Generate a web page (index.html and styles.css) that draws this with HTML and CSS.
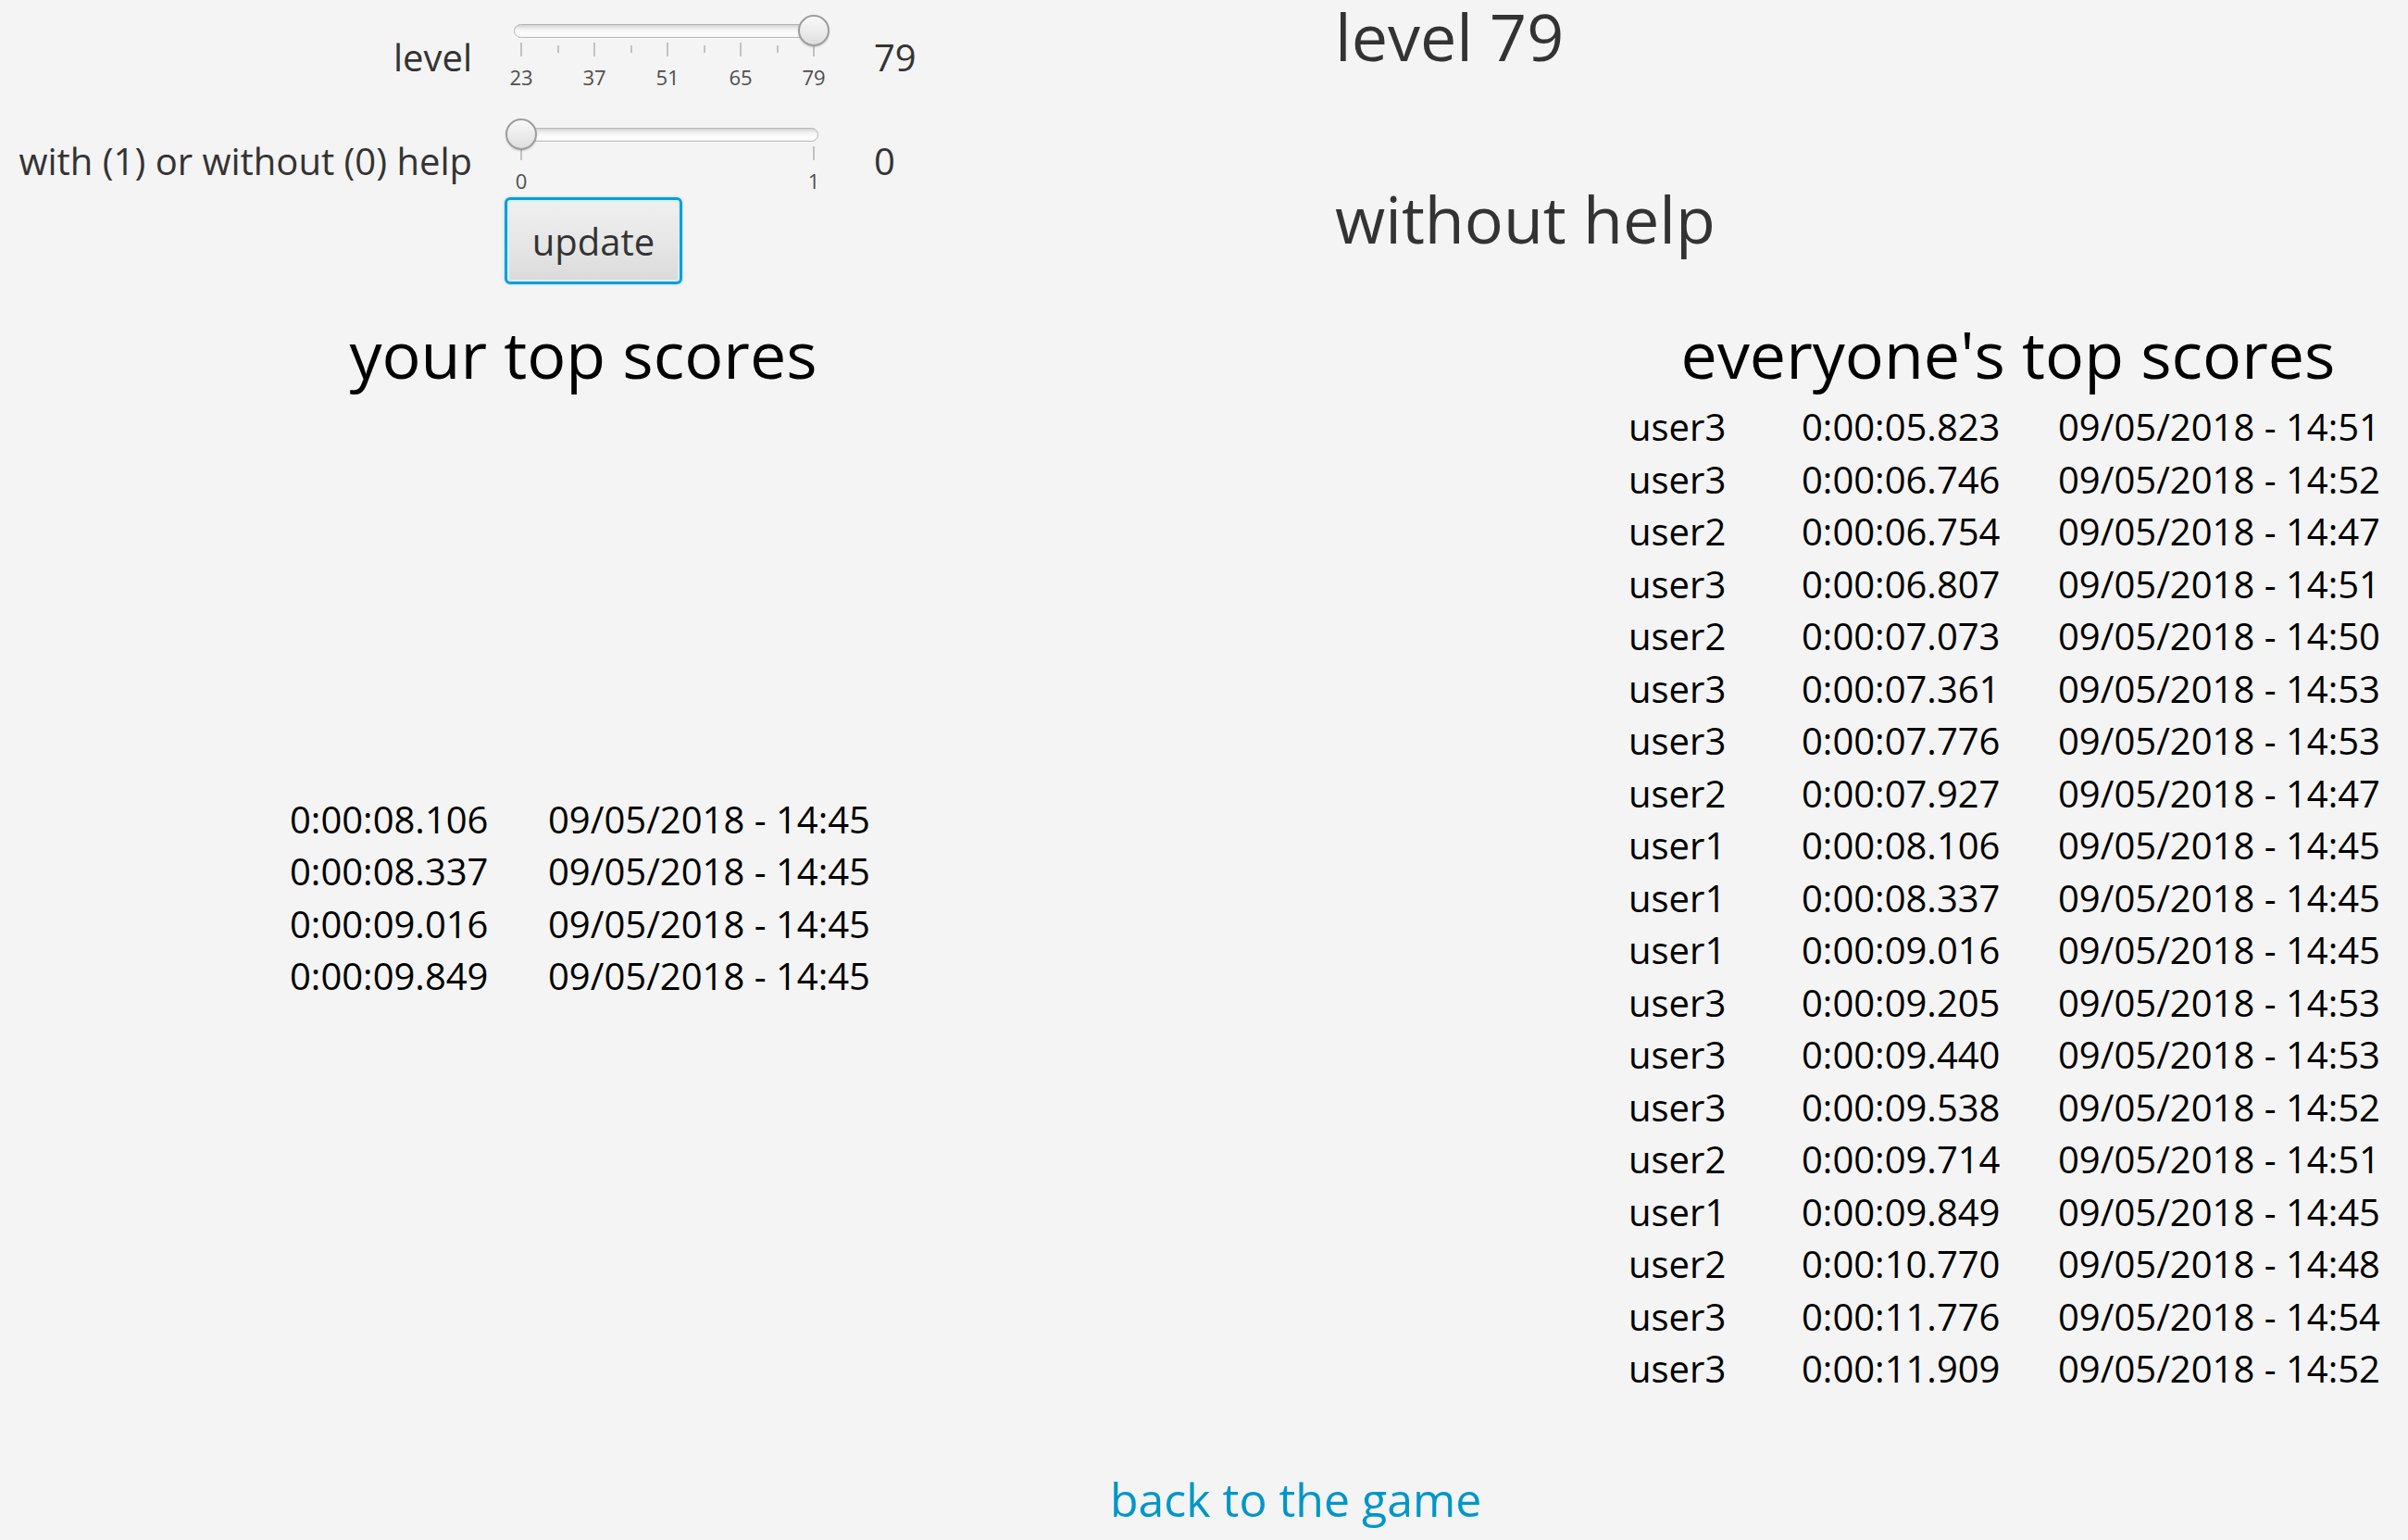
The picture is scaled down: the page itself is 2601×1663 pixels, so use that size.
FILE: index.html
```html
<!DOCTYPE html>
<html lang="en">
<head>
<meta charset="utf-8">
<title>Top scores</title>
<link rel="stylesheet" href="styles.css">
</head>
<body>
<div class="page">
  <section class="top">
    <div class="controls">
      <div class="ctl-label">level</div>
      <div class="slider">
        <div class="track"></div>
        <div class="thumb thumb-end"></div>
        <div class="ticks">
          <span class="tick"></span><span class="tick minor"></span>
          <span class="tick"></span><span class="tick minor"></span>
          <span class="tick"></span><span class="tick minor"></span>
          <span class="tick"></span><span class="tick minor"></span>
          <span class="tick"></span>
        </div>
        <div class="tick-labels">
          <span>23</span><span>37</span><span>51</span><span>65</span><span>79</span>
        </div>
      </div>
      <div class="ctl-value">79</div>

      <div class="ctl-label">with (1) or without (0) help</div>
      <div class="slider">
        <div class="track"></div>
        <div class="thumb thumb-start"></div>
        <div class="ticks">
          <span class="tick"></span>
          <span class="tick"></span>
        </div>
        <div class="tick-labels">
          <span>0</span><span>1</span>
        </div>
      </div>
      <div class="ctl-value">0</div>

      <button class="update" type="button">update</button>
    </div>
    <div class="status">
      <div class="status-line">level 79</div>
      <div class="status-line status-help">without help</div>
    </div>
  </section>

  <section class="scores">
    <h2 class="scores-title title-mine">your top scores</h2>
    <div class="score-list list-mine">
      <span>0:00:08.106</span><span>09/05/2018 - 14:45</span>
      <span>0:00:08.337</span><span>09/05/2018 - 14:45</span>
      <span>0:00:09.016</span><span>09/05/2018 - 14:45</span>
      <span>0:00:09.849</span><span>09/05/2018 - 14:45</span>
    </div>

    <h2 class="scores-title title-all">everyone's top scores</h2>
    <div class="score-list list-all">
      <span>user3</span><span>0:00:05.823</span><span>09/05/2018 - 14:51</span>
      <span>user3</span><span>0:00:06.746</span><span>09/05/2018 - 14:52</span>
      <span>user2</span><span>0:00:06.754</span><span>09/05/2018 - 14:47</span>
      <span>user3</span><span>0:00:06.807</span><span>09/05/2018 - 14:51</span>
      <span>user2</span><span>0:00:07.073</span><span>09/05/2018 - 14:50</span>
      <span>user3</span><span>0:00:07.361</span><span>09/05/2018 - 14:53</span>
      <span>user3</span><span>0:00:07.776</span><span>09/05/2018 - 14:53</span>
      <span>user2</span><span>0:00:07.927</span><span>09/05/2018 - 14:47</span>
      <span>user1</span><span>0:00:08.106</span><span>09/05/2018 - 14:45</span>
      <span>user1</span><span>0:00:08.337</span><span>09/05/2018 - 14:45</span>
      <span>user1</span><span>0:00:09.016</span><span>09/05/2018 - 14:45</span>
      <span>user3</span><span>0:00:09.205</span><span>09/05/2018 - 14:53</span>
      <span>user3</span><span>0:00:09.440</span><span>09/05/2018 - 14:53</span>
      <span>user3</span><span>0:00:09.538</span><span>09/05/2018 - 14:52</span>
      <span>user2</span><span>0:00:09.714</span><span>09/05/2018 - 14:51</span>
      <span>user1</span><span>0:00:09.849</span><span>09/05/2018 - 14:45</span>
      <span>user2</span><span>0:00:10.770</span><span>09/05/2018 - 14:48</span>
      <span>user3</span><span>0:00:11.776</span><span>09/05/2018 - 14:54</span>
      <span>user3</span><span>0:00:11.909</span><span>09/05/2018 - 14:52</span>
    </div>
  </section>

  <a class="back" href="#">back to the game</a>
</div>
</body>
</html>
```

FILE: styles.css
```css
html, body {
  margin: 0;
  padding: 0;
  background: #f4f4f4;
}

body {
  font-family: "Open Sans", "Noto Sans", "Liberation Sans", sans-serif;
  color: #333;
}

.page {
  width: 2601px;
  height: 1663px;
  overflow: hidden;
}

/* ---------- top area ---------- */
.top {
  display: grid;
  grid-template-columns: 1442px 1fr;
  align-items: start;
}

.controls {
  display: grid;
  grid-template-columns: 510px 350px auto;
  grid-template-rows: 112px 85px auto;
  column-gap: 35px;
  padding-top: 16px;
  align-items: start;
}

.ctl-label {
  font-size: 40px;
  line-height: 40px;
  margin-top: 26px;
  text-align: right;
  white-space: nowrap;
  color: #333;
}

.ctl-value {
  font-size: 40px;
  line-height: 40px;
  margin-top: 26px;
  padding-left: 14px;
  color: #333;
}

/* slider */
.slider {
  position: relative;
  width: 350px;
}

.track {
  box-sizing: border-box;
  margin: 10px 0 0 10px;
  width: 329px;
  height: 15px;
  border-radius: 8px;
  border: 1px solid #b4b4b4;
  background: linear-gradient(to bottom, #d4d4d4 0%, #f2f2f2 35%, #fdfdfd 70%, #f6f6f6 100%);
  box-shadow: 0 1px 0 #ffffff;
}

.thumb {
  position: absolute;
  top: 0;
  box-sizing: border-box;
  width: 34px;
  height: 34px;
  border-radius: 50%;
  border: 2px solid #9d9d9d;
  background: linear-gradient(to bottom, #f8f8f8 0%, #ececec 50%, #dedede 100%);
  box-shadow: 0 1px 2px rgba(0, 0, 0, 0.18), inset 0 1px 0 #ffffff;
}

.thumb-end {
  left: 317px;
}

.thumb-start {
  left: 1px;
}

.ticks {
  display: flex;
  justify-content: space-between;
  align-items: flex-start;
  margin: 5px 0 0 17px;
  width: 318px;
  height: 15px;
}

.tick {
  display: block;
  width: 2px;
  height: 15px;
  background: #c2c2c2;
}

.tick.minor {
  height: 8px;
  margin-top: 3px;
}

.tick-labels {
  display: flex;
  justify-content: space-between;
  margin: 11px 0 0 -2px;
  width: 356px;
  font-size: 22px;
  line-height: 22px;
  color: #4e4e4e;
}

.tick-labels span {
  display: block;
  width: 40px;
  text-align: center;
}

.update {
  grid-column: 2;
  grid-row: 3;
  justify-self: start;
  box-sizing: border-box;
  width: 192px;
  height: 94px;
  padding: 0;
  font-family: inherit;
  font-size: 40px;
  color: #333;
  border: 3px solid #0a9fd6;
  border-radius: 6px;
  background: linear-gradient(to bottom, #f0f0f0 0%, #e6e6e6 55%, #dadada 100%);
  box-shadow: inset 0 0 0 2px #d9eef7, 0 0 3px rgba(3, 158, 211, 0.35);
}

.status {
  display: flex;
  flex-direction: column;
}

.status-line {
  font-size: 70px;
  line-height: 78px;
  color: #333;
  white-space: nowrap;
}

.status-help {
  margin-top: 119px;
}

/* ---------- scores ---------- */
.scores {
  display: grid;
  grid-template-columns: 1260px 1fr 864px;
  grid-template-rows: auto auto;
  row-gap: 12px;
  margin-top: 36px;
}

.scores-title {
  margin: 0;
  font-size: 70px;
  line-height: 78px;
  font-weight: normal;
  color: #000;
  text-align: center;
  white-space: nowrap;
}

.title-mine {
  grid-column: 1;
  grid-row: 1;
}

.title-all {
  grid-column: 3;
  grid-row: 1;
}

.score-list {
  display: grid;
  font-size: 40px;
  line-height: 56.5px;
  color: #000;
  white-space: nowrap;
}

.list-mine {
  grid-column: 1;
  grid-row: 2;
  align-self: center;
  grid-template-columns: 279px auto;
  padding-left: 313px;
}

.list-all {
  grid-column: 3;
  grid-row: 2;
  grid-template-columns: 187px 277px auto;
  padding-left: 22px;
}

.back {
  display: block;
  margin-top: 82px;
  padding-left: 1199px;
  font-size: 50px;
  line-height: 60px;
  color: #0096c9;
  text-decoration: none;
  white-space: nowrap;
}
```
